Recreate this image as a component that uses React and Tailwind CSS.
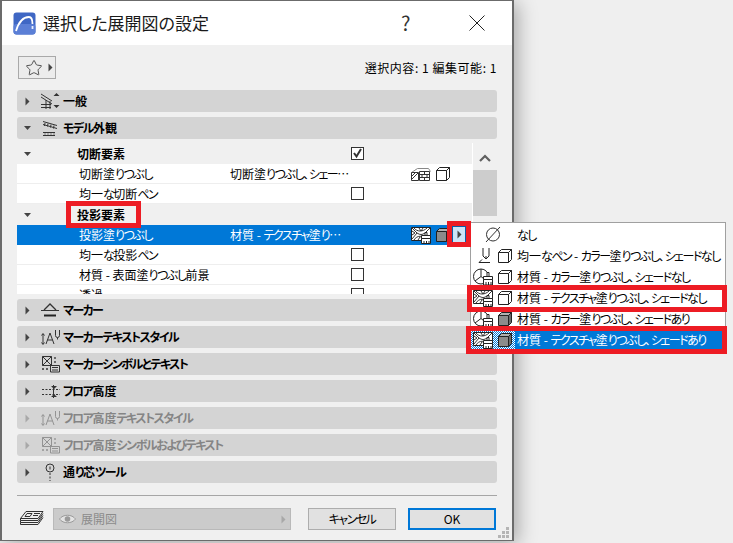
import { Star } from "lucide-react";

// Meiryo UI sets kana much narrower than Noto, so tighten kana runs only
function Jp({ text }) {
  return text.split(/([\u3040-\u30ff]+)/).map((part, i) =>
    i % 2 === 1 ? (
      <span key={i} className="tracking-[-1.5px]">
        {part}
      </span>
    ) : (
      part
    )
  );
}

function Tri({ dir = "right", color = "#444" }) {
  if (dir === "down") {
    return (
      <svg width="9" height="6" viewBox="0 0 9 6" className="shrink-0">
        <path d="M1 1h7L4.500 5z" fill={color} />
      </svg>
    );
  }
  return (
    <svg width="5" height="9" viewBox="0 0 5 9" className="shrink-0">
      <path d="M0.500 0.500v8L4.500 4.500z" fill={color} />
    </svg>
  );
}

function AppLogo() {
  return (
    <svg width="23" height="23" viewBox="0 0 23 23">
      <rect x="0.500" y="0.500" width="22" height="22" rx="3" fill="#3f67c4" />
      <rect x="0.500" y="12" width="22" height="10.500" rx="3" fill="#5b7fd6" />
      <path d="M3 19C6 9 11 5 16 5c2.500 0 3.500 3 3.500 7" fill="none" stroke="#fff" strokeWidth="1.800" />
      <path d="M19.500 14v3" stroke="#e8efff" strokeWidth="1.800" />
    </svg>
  );
}

function GeneralIcon() {
  return (
    <svg width="20" height="18" viewBox="0 0 20 18" fill="none" stroke="#333">
      <path d="M1 2l11 7M1 5l11 7M1 12.500h10M1 15.500h10M6 8v9M10 9v8" />
      <path d="M13.500 4l3-3 3 3z M13.500 13l3 3 3-3z" fill="#333" stroke="none" />
    </svg>
  );
}

function ModelIcon() {
  return (
    <svg width="16" height="17" viewBox="0 0 16 17" fill="none" stroke="#333">
      <path d="M1 1.500l14 4M1 4.500l14 4M3 3l-.500 3M6 3.500l-.500 3M9 4.500l-.500 3M12 5.500l-.500 3" />
      <path d="M1 12.500h12M1 15.500h12" />
      <path d="M3 12.500v3M6 12.500v3M9 12.500v3M12 12.500v3" strokeDasharray="1 1" />
    </svg>
  );
}

function MarkerIcon() {
  return (
    <svg width="20" height="14" viewBox="0 0 20 14" fill="none">
      <path d="M1 7.500h18" stroke="#333" />
      <path d="M4 7l6-6 6 6" stroke="#333" strokeWidth="1.300" />
      <path d="M4 12.500h12" stroke="#222" strokeWidth="2" />
    </svg>
  );
}

function TextStyleIcon() {
  return (
    <svg width="21" height="16" viewBox="0 0 21 16" fill="none" stroke="#333">
      <path d="M3 5v10M1.500 6.500L3 4.500l1.500 2M1.500 13.500L3 15.500l1.500-2" />
      <path d="M6 15L10 4l4 11M7.500 11h5" />
      <path d="M15.500 1v5.500a2 2 0 0 0 4 0V1M17.500 8.500v2" />
    </svg>
  );
}

function SymbolIcon() {
  return (
    <svg width="19" height="18" viewBox="0 0 19 18" fill="none" stroke="#333">
      <path d="M1.500 1.500h9v9h-9zM1.500 1.500l9 9M10.500 1.500l-9 9" />
      <path d="M9.500 10.500h9v6.500h-9zM11 12.500h6M11 15h6" />
      <path d="M14 2v2M14 6v2M1 14h2M5 14h2" strokeWidth="1.300" />
    </svg>
  );
}

function FloorIcon() {
  return (
    <svg width="19" height="15" viewBox="0 0 19 15" fill="none" stroke="#333">
      <path d="M1 5.500h18M1 10.500h18" strokeDasharray="2 1.500" />
      <path d="M12.500 1v13" />
      <path d="M10 2h6l-3 3zM10 13h6l-3-3z" fill="#333" stroke="none" />
    </svg>
  );
}

function PinIcon() {
  return (
    <svg width="12" height="18" viewBox="0 0 12 18" fill="none" stroke="#333">
      <circle cx="6" cy="5" r="4" />
      <path d="M6 3.500v3" />
      <path d="M6 10v8" strokeDasharray="2 1.500" />
    </svg>
  );
}

function Cube({ filled }) {
  return (
    <svg width="14" height="14" viewBox="0 0 14 14" fill="none" stroke="#222" className="shrink-0">
      <path d="M0.500 3.500l3-3h10l-3 3z" fill={filled ? "#b0b0b0" : "#fff"} />
      <path d="M10.500 3.500l3-3v10l-3 3z" fill={filled ? "#6a6a6a" : "#fff"} />
      <path d="M0.500 3.500h10v10h-10z" fill={filled ? "#8b8b8b" : "#fff"} />
    </svg>
  );
}

function CutFillIcon() {
  return (
    <svg width="21" height="15" viewBox="0 0 21 15" fill="none" stroke="#333" className="shrink-0">
      <path d="M0.500 6.500l6-4h11l2 3" stroke="#888" />
      <path d="M0.500 6.500h7v8h-7zM1 13l6-6M1 10l3-3" fill="#fff" />
      <path d="M8.500 5.500h10v9h-10z" fill="#fff" />
      <path d="M8.500 8.500h10M8.500 11.500h10M13.500 5.500v3M11 8.500v3M16 8.500v3M13.500 11.500v3" />
    </svg>
  );
}

function TextureBrush() {
  return (
    <svg width="21" height="18" viewBox="0 0 21 18" fill="none" stroke="#222" className="shrink-0">
      <path d="M0.500 1.500h19v13h-19z" fill="#fff" />
      <path
        d="M1 2l5 5-5 6M19 2l-5 5 5 6M3 2c3 4 9 4 13 0M3 14c3-5 9-5 13 0M1 5l3 2M1 9l3-2M6 7c3 2 5 2 8 0M8 2l2 3M12 2l-2 3M7 14l2-3M12 14l-2-3"
        stroke="#333"
      />
      <path d="M14 6.500h2v3h-2zM10.500 9.500h9v3h-9z" fill="#fff" />
      <path d="M10.500 12.500h9v5h-9z" fill="#fff" />
      <path d="M13 15v2.500M15.500 15v2.500M18 15v2.500" />
    </svg>
  );
}

function ColorBrush() {
  return (
    <svg width="21" height="18" viewBox="0 0 21 18" fill="none" stroke="#222" className="shrink-0">
      <circle cx="8" cy="8.500" r="7.500" fill="#fff" />
      <path d="M8 1v7.500L2 13M8 8.500l5 4" />
      <path d="M14 4.500h2v4h-2zM10.500 8.500h9v3h-9z" fill="#fff" />
      <path d="M10.500 11.500h9v5.500h-9z" fill="#fff" />
      <path d="M13 14v3M15.500 14v3M18 14v3" />
    </svg>
  );
}

function PenIcon() {
  return (
    <svg width="21" height="18" viewBox="0 0 21 18" fill="none" stroke="#222" className="shrink-0">
      <path d="M16 1v8l-3 3-3-3V1" />
      <path d="M13 9v3M6 15.500h11M6 15.500l3-3" />
    </svg>
  );
}

function NoneIcon() {
  return (
    <svg width="16" height="17" viewBox="0 0 16 17" fill="none" stroke="#333" className="shrink-0">
      <circle cx="8" cy="8.500" r="6.500" />
      <path d="M15 1L1 16" />
    </svg>
  );
}

function EyeIcon() {
  return (
    <svg width="17" height="10" viewBox="0 0 17 10" fill="none">
      <path d="M0.500 5C4 0 13 0 16.500 5 13 10 4 10 0.500 5z" stroke="#9a9a9a" fill="#e4e4e4" />
      <circle cx="8.500" cy="5" r="2.800" fill="#9a9a9a" />
    </svg>
  );
}

function StackIcon() {
  return (
    <svg width="25" height="18" viewBox="0 0 25 18" fill="none" stroke="#333">
      <path d="M7 1.500h17l-5 7H1.500z" fill="#f0f0f0" />
      <path d="M8 3.500h5l-2 3H6zM15 3.500h6M14 5.500h5" />
      <path d="M1.500 8.500v2h17.500l5-7M1.500 10.500v2h17.500l5-7M1.500 12.500v2h17.500l5-7" />
    </svg>
  );
}

function SectionBar({ icon, label, open, disabled }) {
  return (
    <div className="mb-[5px] flex h-[22px] items-center rounded-[3px] bg-[#d4d4d4]">
      <div className={`flex w-[20px] justify-center pl-[1px] ${disabled ? "opacity-30" : ""}`}>
        <Tri dir={open ? "down" : "right"} />
      </div>
      <div className={`flex w-[26px] justify-center ${disabled ? "opacity-40" : ""}`}>{icon}</div>
      <span className={`text-[12px] font-bold whitespace-nowrap ${disabled ? "text-[#858585]" : "text-black"}`}>
        <Jp text={label} />
      </span>
    </div>
  );
}

function SubHeader({ label, checkbox }) {
  return (
    <div className="grid h-[21px] grid-cols-[60px_274px_1fr] items-center bg-[#f0f0f0]">
      <div className="pl-[6px]">
        <Tri dir="down" />
      </div>
      <span className="text-[12px] font-bold text-black">{label}</span>
      {checkbox && <Checkbox checked />}
    </div>
  );
}

function Checkbox({ checked }) {
  return (
    <div className="flex h-[13px] w-[13px] items-center justify-center border border-[#333] bg-white">
      {checked && (
        <svg width="11" height="11" viewBox="0 0 11 11" fill="none">
          <path d="M2 5l2.500 3.500L9 1" stroke="#333" strokeWidth="2" />
        </svg>
      )}
    </div>
  );
}

function Row({ label, value, checkbox, icons, selected }) {
  return (
    <div
      className={`grid h-[20px] grid-cols-[62px_151px_121px_60px_61px] items-center border-b text-[12px] ${
        selected ? "border-[#0078d7] bg-[#0078d7] text-white" : "border-[#eeeeee] bg-white text-black"
      }`}
    >
      <div />
      <span className="whitespace-nowrap">
        <Jp text={label} />
      </span>
      <span className="whitespace-nowrap">{value && <Jp text={value} />}</span>
      <div>{checkbox && <Checkbox />}</div>
      <div className="flex items-center gap-[4px]">{icons}</div>
    </div>
  );
}

const sections = [
  { label: "マーカー", icon: <MarkerIcon /> },
  { label: "マーカーテキストスタイル", icon: <TextStyleIcon /> },
  { label: "マーカーシンボルとテキスト", icon: <SymbolIcon /> },
  { label: "フロア高度", icon: <FloorIcon /> },
  { label: "フロア高度テキストスタイル", icon: <TextStyleIcon />, disabled: true },
  { label: "フロア高度シンボルおよびテキスト", icon: <SymbolIcon />, disabled: true },
  { label: "通り芯ツール", icon: <PinIcon /> },
];

const menuItems = [
  { label: "なし", none: true },
  { label: "均一なペン - カラー塗りつぶし、シェードなし", icon: <PenIcon />, cube: <Cube /> },
  { label: "材質 - カラー塗りつぶし、シェードなし", icon: <ColorBrush />, cube: <Cube /> },
  { label: "材質 - テクスチャ塗りつぶし、シェードなし", icon: <TextureBrush />, cube: <Cube /> },
  { label: "材質 - カラー塗りつぶし、シェードあり", icon: <ColorBrush />, cube: <Cube filled /> },
  { label: "材質 - テクスチャ塗りつぶし、シェードあり", icon: <TextureBrush />, cube: <Cube filled />, active: true },
];

function FlyoutMenu() {
  return (
    <div className="absolute top-[222px] left-[470px] z-10 h-[131px] w-[256px] border border-[#a0a0a0] bg-white pt-[1px]">
      {menuItems.map((item) => (
        <div key={item.label} className="flex h-[21px] items-center text-[12px] text-black">
          <div
            className={`flex h-full w-[44px] shrink-0 items-center gap-[4px] pl-[2px] ${
              item.active ? "bg-[repeating-conic-gradient(#0078d7_0_25%,#ffffff_0_50%)] bg-[length:2px_2px]" : ""
            }`}
          >
            {item.none ? (
              <div className="pl-[12px]">
                <NoneIcon />
              </div>
            ) : (
              item.icon
            )}
            {item.cube}
          </div>
          <span
            className={`flex h-full flex-1 items-center pl-[2px] whitespace-pre ${
              item.active ? "bg-[#0078d7] text-white" : ""
            }`}
          >
            <span>
              <Jp text={item.label} />
            </span>
          </span>
        </div>
      ))}
    </div>
  );
}

export default function App() {
  return (
    <div className="relative h-[543px] w-[733px] overflow-hidden bg-[#efefef] font-['Noto_Sans_CJK_JP',sans-serif] [font-feature-settings:'palt']">
      <div className="flex h-[541px] w-[514px] flex-col border-x-[2px] border-y border-[#6b6b6b] bg-[#f0f0f0] shadow-[4px_3px_18px_rgba(0,0,0,0.3)]">
        <div className="flex h-[44px] shrink-0 items-center bg-white pl-[11px]">
          <AppLogo />
          <span className="ml-[7px] text-[17px] text-[#1a1a1a]">選択した展開図の設定</span>
          <span className="ml-[192px] text-[20px] leading-none text-[#333]">?</span>
          <svg width="16" height="16" viewBox="0 0 16 16" className="ml-[59px]" fill="none" stroke="#222">
            <path d="M0.500 0.500l15 15M15.500 0.500l-15 15" />
          </svg>
        </div>

        <div className="flex flex-1 flex-col px-[15px]">
          <div className="flex h-[34px] shrink-0 items-center justify-between pt-[11px]">
            <div className="ml-[1px] flex h-[23px] w-[38px] items-center gap-[5px] border border-[#a9a9a9] bg-[#ececec] pl-[6px]">
              <Star size={18} strokeWidth={1.100} color="#333" />
              <Tri />
            </div>
            <span className="text-[12px] tracking-[0.55px] text-black">選択内容: 1 編集可能: 1</span>
          </div>

          <div className="mt-[11px] flex flex-col">
            <SectionBar open={false} label="一般" icon={<GeneralIcon />} />
            <SectionBar open label="モデル外観" icon={<ModelIcon />} />
          </div>

          <div className="-mt-[1px] mb-[5px] flex h-[151px] shrink-0 overflow-hidden">
            <div className="w-[455px]">
              <SubHeader label="切断要素" checkbox />
              <Row
                label="切断塗りつぶし"
                value="切断塗りつぶし、シェー…"
                icons={
                  <>
                    <CutFillIcon />
                    <Cube />
                  </>
                }
              />
              <Row label="均一な切断ペン" checkbox />
              <SubHeader label="投影要素" />
              <Row
                selected
                label="投影塗りつぶし"
                value="材質 - テクスチャ塗り…"
                icons={
                  <>
                    <TextureBrush />
                    <Cube filled />
                  </>
                }
              />
              <Row label="均一な投影ペン" checkbox />
              <Row label="材質 - 表面塗りつぶし前景" checkbox />
              <Row label="透過" checkbox />
            </div>
            <div className="w-[25px] border-l border-white bg-[#f0f0f0]">
              <div className="flex h-[27px] items-center justify-center pt-[2px]">
                <svg width="12" height="8" viewBox="0 0 12 8" fill="none" stroke="#606060" strokeWidth="2.200">
                  <path d="M1 7l5-5 5 5" />
                </svg>
              </div>
              <div className="h-[46px] bg-[#cdcdcd]" />
            </div>
          </div>

          <div className="flex flex-col">
            {sections.map((section) => (
              <SectionBar key={section.label} {...section} />
            ))}
          </div>

          <div className="mt-[7px] border-t border-[#a6a6a6]" />

          <div className="mt-[12px] flex h-[22px] items-center">
            <div className="flex w-[36px] pl-[2px]">
              <StackIcon />
            </div>
            <div className="flex h-[22px] w-[238px] items-center border border-[#b9b9b9] bg-[#cbcbcb] pr-[4px] pl-[5px] text-[12px] text-[#8b8b8b]">
              <EyeIcon />
              <span className="ml-[5px] flex-1">展開図</span>
              <Tri color="#a8a8a8" />
            </div>
            <button className="ml-[17px] h-[22px] w-[88px] border border-[#adadad] bg-[#e1e1e1] text-[12px] text-black">
              <Jp text="キャンセル" />
            </button>
            <button className="ml-[12px] h-[22px] w-[88px] border-[2px] border-[#0078d7] bg-[#e1e1e1] text-[12px] text-black">
              OK
            </button>
          </div>
        </div>
      </div>

      {/* arrow button on the selected row */}
      <div className="absolute top-[226px] left-[452px] z-20 flex h-[17px] w-[14px] items-center justify-center border border-[#0a5fa8] bg-[#cce4f7]">
        <Tri />
      </div>

      <FlyoutMenu />

      {/* resize grip */}
      <svg width="12" height="12" viewBox="0 0 12 12" className="absolute top-[527px] left-[498px]" fill="#b5b5b5">
        <path d="M8 0h3v3H8zM4 4h3v3H4zM8 4h3v3H8zM0 8h3v3H0zM4 8h3v3H4zM8 8h3v3H8z" />
      </svg>

      {/* red annotation boxes */}
      <div className="absolute top-[201px] left-[66px] z-30 h-[27px] w-[75px] border-[5px] border-[#ed1c24]" />
      <div className="absolute top-[221px] left-[447px] z-30 h-[26px] w-[24px] border-[5px] border-[#ed1c24]" />
      <div className="absolute top-[285px] left-[467px] z-30 h-[27px] w-[260px] border-[5px] border-[#ed1c24]" />
      <div className="absolute top-[326px] left-[466px] z-30 h-[28px] w-[261px] border-[5px] border-[#ed1c24]" />
    </div>
  );
}
